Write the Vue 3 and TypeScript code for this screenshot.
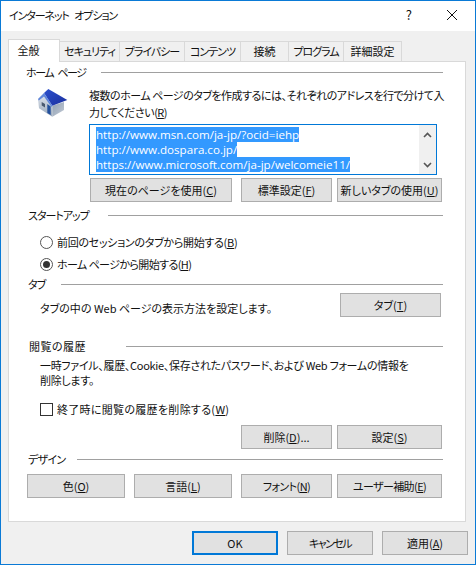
<script setup lang="ts">
const tabs = [
  { label: 'セキュリティ', width: 60, narrow: true },
  { label: 'プライバシー', width: 65, narrow: true },
  { label: 'コンテンツ', width: 56, narrow: true },
  { label: '接続', width: 48, narrow: false },
  { label: 'プログラム', width: 55, narrow: true },
  { label: '詳細設定', width: 58, narrow: false },
]
const urls = [
  'http://www.msn.com/ja-jp/?ocid=iehp',
  'http://www.dospara.co.jp/',
  'https://www.microsoft.com/ja-jp/welcomeie11/',
]
</script>

<template>
  <div class="window">
    <div class="titlebar">
      <span class="title">インターネット オプション</span>
      <span class="help">?</span>
      <svg class="close" width="12" height="12" viewBox="0 0 12 12">
        <path d="M1 1L11 11M11 1L1 11" stroke="#111" stroke-width="1" fill="none" />
      </svg>
    </div>

    <div class="body">
      <div class="tabs">
        <div class="tab active">全般</div>
        <div
          v-for="t in tabs"
          :key="t.label"
          class="tab"
          :class="{ narrow: t.narrow }"
          :style="{ width: t.width + 'px' }"
        >{{ t.label }}</div>
      </div>

      <div class="panel">
        <div class="group-head home-head"><span>ホーム ページ</span><i></i></div>
        <div class="home">
          <svg class="house" width="34" height="32" viewBox="0 0 34 32">
            <defs>
              <linearGradient id="wall" x1="0" y1="0" x2="0" y2="1">
                <stop offset="0" stop-color="#e4e9f0" />
                <stop offset="1" stop-color="#9aa9bb" />
              </linearGradient>
              <linearGradient id="side" x1="0" y1="0" x2="1" y2="1">
                <stop offset="0" stop-color="#8f9fb3" />
                <stop offset="1" stop-color="#c4ccd6" />
              </linearGradient>
              <linearGradient id="roof" x1="0" y1="0" x2="1" y2="1">
                <stop offset="0" stop-color="#2c50cc" />
                <stop offset="1" stop-color="#1a2f9e" />
              </linearGradient>
            </defs>
            <path d="M2 12L8 6L16.3 18.7V29.7L3 21.3Z" fill="url(#wall)" />
            <path d="M16.3 18.7L28 15V23L16.3 29.7Z" fill="url(#side)" />
            <path d="M8 6L12.3 2L31.3 13L16.3 18.7Z" fill="url(#roof)" />
            <path d="M2 12L8 6L16.3 18.7L15.5 20L8 9.5L2.8 13.5Z" fill="#5f86dc" />
            <path d="M11.3 17L14.7 19.5V28L11.3 26Z" fill="#23509c" />
            <path d="M5.7 15L9 17V20.5L5.7 18.5Z" fill="#4a5a6e" />
          </svg>
          <div class="home-main">
            <p class="desc">複数のホーム ページのタブを作成するには、それぞれのアドレスを行で分けて入<br />力してください(<u>R</u>)</p>
            <div class="urlbox">
              <div class="urls">
                <div v-for="u in urls" :key="u" class="url"><span>{{ u }}</span></div>
              </div>
              <div class="scroll">
                <svg width="9" height="6" viewBox="0 0 9 6"><path d="M1 5L4.5 1.5L8 5" stroke="#555" stroke-width="1.6" fill="none" /></svg>
                <svg width="9" height="6" viewBox="0 0 9 6"><path d="M1 1L4.5 4.5L8 1" stroke="#555" stroke-width="1.6" fill="none" /></svg>
              </div>
            </div>
            <div class="home-btns">
              <button class="btn w142">現在のページを使用(<u>C</u>)</button>
              <button class="btn w91">標準設定(<u>F</u>)</button>
              <button class="btn w105">新しいタブの使用(<u>U</u>)</button>
            </div>
          </div>
        </div>

        <div class="group-head startup-head"><span>スタートアップ</span><i></i></div>
        <label class="opt first"><b class="radio"></b><span>前回のセッションのタブから開始する(<u>B</u>)</span></label>
        <label class="opt second"><b class="radio on"></b><span>ホーム ページから開始する(<u>H</u>)</span></label>

        <div class="group-head tab-head"><span>タブ</span><i></i></div>
        <div class="tab-row">
          <span>タブの中の Web ページの表示方法を設定します。</span>
          <button class="btn w101">タブ(<u>T</u>)</button>
        </div>

        <div class="group-head history-head"><span>閲覧の履歴</span><i></i></div>
        <p class="history">一時ファイル、履歴、Cookie、保存されたパスワード、および Web フォームの情報を<br />削除します。</p>
        <label class="opt check-row"><b class="check"></b><span>終了時に閲覧の履歴を削除する(<u>W</u>)</span></label>
        <div class="btn-row history-btns">
          <button class="btn w91">削除(<u>D</u>)...</button>
          <button class="btn w105">設定(<u>S</u>)</button>
        </div>

        <div class="group-head design-head"><span>デザイン</span><i></i></div>
        <div class="btn-row design-btns">
          <button class="btn w98">色(<u>O</u>)</button>
          <button class="btn w98">言語(<u>L</u>)</button>
          <button class="btn w91 tight">フォント(<u>N</u>)</button>
          <button class="btn w105 tight">ユーザー補助(<u>E</u>)</button>
        </div>
      </div>

      <div class="footer">
        <button class="btn foot ok">OK</button>
        <button class="btn foot cancel">キャンセル</button>
        <button class="btn foot">適用(<u>A</u>)</button>
      </div>
    </div>
  </div>
</template>

<style>
body {
  margin: 0;
  background: #f0f0f0;
}
</style>

<style scoped>
.window {
  width: 476px;
  height: 565px;
  box-sizing: border-box;
  border: 1px solid #0a7ad6;
  background: #f0f0f0;
  font-family: "Noto Sans CJK JP", "Liberation Sans", sans-serif;
  font-size: 11px;
  font-feature-settings: "palt";
  color: #111;
  display: flex;
  flex-direction: column;
  overflow: hidden;
}

.titlebar {
  height: 30px;
  flex: none;
  background: #fff;
  display: flex;
  align-items: center;
  padding: 0 0 3px 8px;
  box-sizing: border-box;
}

.title {
  flex: 1;
  letter-spacing: -1.1px;
  word-spacing: 4px;
}

.help {
  font-size: 13px;
  margin-right: 34px;
}

.close {
  margin-right: 17px;
}

.body {
  flex: 1;
  padding: 8px 7px 0 7px;
  display: flex;
  flex-direction: column;
}

.tabs {
  display: flex;
  height: 23px;
  align-items: flex-end;
  position: relative;
  z-index: 1;
  margin-bottom: -1px;
}

.tab {
  box-sizing: border-box;
  height: 21px;
  line-height: 19px;
  text-align: center;
  background: #f0f0f0;
  border: 1px solid #d9d9d9;
  border-left: 0;
  white-space: nowrap;
}

.tab.narrow {
  letter-spacing: -1px;
}

.tab.active {
  width: 52px;
  height: 23px;
  line-height: 20px;
  padding-right: 11px;
  background: #fff;
  border-left: 1px solid #d9d9d9;
  border-bottom: 0;
}

.panel {
  box-sizing: border-box;
  height: 461px;
  width: 458px;
  background: #fff;
  border: 1px solid #d9d9d9;
  padding: 0 0 0 17px;
}

.group-head {
  display: flex;
  align-items: center;
  height: 18px;
  width: 417px;
}

.group-head span {
  flex: none;
  white-space: nowrap;
}

.group-head i {
  flex: 1;
  height: 1px;
  background: #a0a0a0;
}

.home-head {
  margin-top: 1px;
}

.home-head span {
  width: 75px;
  letter-spacing: -1.4px;
  word-spacing: 3px;
}

.home {
  display: flex;
  margin-top: 6px;
}

.house {
  margin: 0 0 0 10px;
  flex: none;
}

.home-main {
  margin-left: 19px;
}

.desc {
  margin: 0;
  width: 362px;
  line-height: 17px;
  letter-spacing: -0.5px;
  white-space: nowrap;
}

.urlbox {
  box-sizing: border-box;
  width: 348px;
  height: 51px;
  margin-top: 3px;
  border: 1px solid #0078d7;
  display: flex;
  justify-content: space-between;
  background: #fff;
}

.urls {
  padding: 2px 0 0 6px;
}

.url {
  height: 15px;
  line-height: 15px;
  font-family: "Open Sans", "Noto Sans", sans-serif;
  font-size: 11.6px;
  white-space: nowrap;
}

.url span {
  display: inline-block;
  background: #3399ff;
  color: #fff;
}

.scroll {
  width: 17px;
  background: #f0f0f0;
  display: flex;
  flex-direction: column;
  align-items: center;
  justify-content: space-between;
  padding: 7px 0 6px;
}

.home-btns {
  display: flex;
  margin-top: 3px;
  padding-left: 1px;
}

.home-btns .w91 {
  margin-left: 9px;
}

.home-btns .w105 {
  margin-left: 5px;
}

.btn {
  box-sizing: border-box;
  height: 24px;
  padding: 0;
  background: #e1e1e1;
  border: 1px solid #adadad;
  border-radius: 0;
  font: inherit;
  font-feature-settings: inherit;
  color: inherit;
  white-space: nowrap;
}

.tight {
  letter-spacing: -0.6px;
}

.cancel {
  letter-spacing: -1.5px;
}

.w142 { width: 142px; }
.w105 { width: 105px; }
.w101 { width: 101px; }
.w98 { width: 98px; }
.w91 { width: 91px; }

.startup-head {
  margin-top: 4px;
  padding-left: 2px;
  box-sizing: border-box;
}

.startup-head span {
  width: 80px;
  letter-spacing: -1px;
}

.opt {
  display: flex;
  align-items: center;
  height: 16px;
}

.first {
  margin: 10px 0 0 14px;
  letter-spacing: -0.3px;
}

.second {
  margin: 6px 0 0 14px;
  letter-spacing: -0.6px;
}

.radio {
  width: 13px;
  height: 13px;
  border: 1px solid #555;
  border-radius: 50%;
  box-sizing: border-box;
  margin-right: 4px;
  position: relative;
}

.radio.on::after {
  content: "";
  position: absolute;
  left: 2px;
  top: 2px;
  width: 7px;
  height: 7px;
  border-radius: 50%;
  background: #333;
}

.tab-head {
  margin-top: 3px;
  padding-left: 2px;
  box-sizing: border-box;
}

.tab-head span {
  width: 33px;
  letter-spacing: -1px;
}

.tab-row {
  display: flex;
  justify-content: space-between;
  align-items: center;
  margin: 0 0 0 14px;
  height: 24px;
  width: 401px;
}

.tab-row span {
  margin-top: 6px;
}

.history-head {
  margin-top: 20px;
  padding-left: 3px;
  box-sizing: border-box;
}

.history-head span {
  width: 97px;
  letter-spacing: 0.5px;
}

.history {
  margin: 3px 0 0 14px;
  line-height: 15px;
  letter-spacing: -0.3px;
  white-space: nowrap;
}

.check-row {
  margin: 13px 0 0 14px;
  letter-spacing: 0.3px;
}

.check {
  width: 13px;
  height: 13px;
  box-sizing: border-box;
  border: 1px solid #333;
  margin-right: 4px;
}

.btn-row {
  display: flex;
  width: 415px;
  margin-left: 1px;
}

.history-btns {
  justify-content: flex-end;
  gap: 5px;
  margin-top: 8px;
}

.design-head {
  margin-top: 1px;
  padding-left: 2px;
  box-sizing: border-box;
}

.design-head span {
  width: 49px;
  letter-spacing: -0.7px;
}

.design-btns {
  margin-top: 6px;
}

.design-btns .w98 + .w98 {
  margin-left: 9px;
}

.design-btns .w91 {
  margin-left: 9px;
}

.design-btns .w105 {
  margin-left: 5px;
}

.footer {
  display: flex;
  justify-content: flex-end;
  gap: 9px;
  margin-top: 9px;
}

.foot {
  width: 86px;
}

.ok {
  border: 2px solid #0078d7;
}
</style>
